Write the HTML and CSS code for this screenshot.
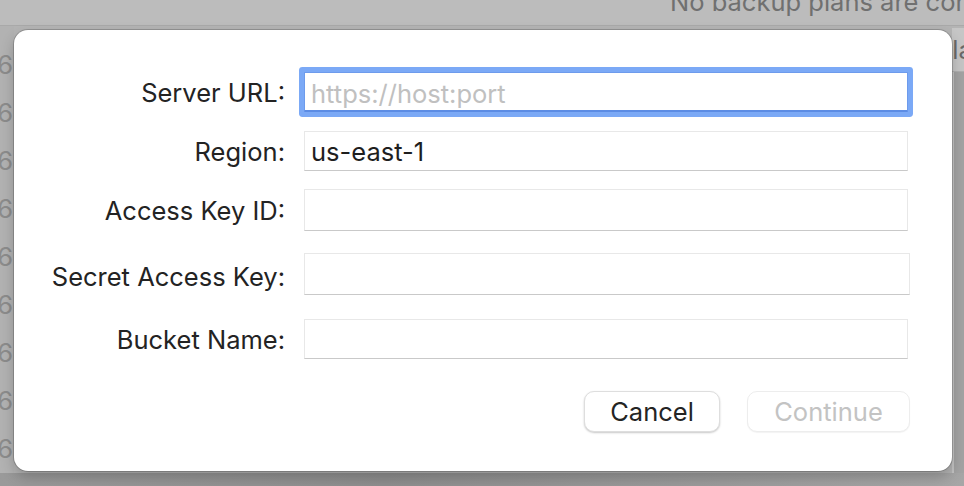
FILE: index.html
```html
<!DOCTYPE html>
<html lang="en">
<head>
<meta charset="utf-8">
<title>S3 Backup Destination</title>
<link rel="stylesheet" href="styles.css">
</head>
<body>
<div class="backdrop">
  <div class="top-strip"><span class="top-text">No backup plans are configured</span></div>
  <div class="middle">
    <div class="left-col">
      <div class="num">16</div><div class="num">16</div><div class="num">16</div>
      <div class="num">16</div><div class="num">16</div><div class="num">16</div>
      <div class="num">16</div><div class="num">16</div><div class="num">16</div>
    </div>
    <div class="spacer"></div>
    <div class="right-col">
      <div class="right-btn"><span>Plans</span></div>
      <div class="right-rest"></div>
    </div>
  </div>
  <div class="bottom-strip"></div>
</div>

<div class="modal">
  <form class="form">
    <div class="row row-1">
      <label class="label" for="url">Server URL:</label>
      <input class="field field-focus" id="url" type="text" placeholder="https://host:port">
    </div>
    <div class="row row-2">
      <label class="label" for="region">Region:</label>
      <input class="field" id="region" type="text" value="us-east-1">
    </div>
    <div class="row row-3">
      <label class="label" for="akid">Access Key ID:</label>
      <input class="field field-tall" id="akid" type="text">
    </div>
    <div class="row row-4">
      <label class="label" for="secret">Secret Access Key:</label>
      <input class="field field-tall field-wide" id="secret" type="password">
    </div>
    <div class="row row-5">
      <label class="label" for="bucket">Bucket Name:</label>
      <input class="field" id="bucket" type="text">
    </div>
    <div class="actions">
      <button type="button" class="btn btn-cancel">Cancel</button>
      <button type="button" class="btn btn-disabled" disabled>Continue</button>
    </div>
  </form>
</div>
</body>
</html>
```

FILE: styles.css
```css
* { box-sizing: border-box; }

html, body {
  margin: 0;
  padding: 0;
  width: 964px;
  height: 486px;
  overflow: hidden;
}

body {
  font-family: Inter, "Liberation Sans", Arial, sans-serif;
  background: #b4b4b4;
  position: relative;
}

.backdrop {
  display: flex;
  flex-direction: column;
  height: 486px;
}

.top-strip {
  height: 30px;
  background: #bcbcbc;
  overflow: hidden;
  display: flex;
  padding-left: 670px;
  border-bottom: 1px solid #a9a9a9;
}

.top-text {
  font-size: 25.5px;
  line-height: 26px;
  color: #707070;
  white-space: nowrap;
  margin-top: -11px;
}

.middle {
  flex: 1;
  display: flex;
}

.left-col {
  width: 14px;
  overflow: hidden;
  background: #b2b2b2;
  padding-top: 15px;
  display: flex;
  flex-direction: column;
  align-items: flex-end;
  padding-right: 1px;
}

.num {
  font-size: 25.5px;
  line-height: 48px;
  height: 48px;
  color: #8c8c8c;
  white-space: nowrap;
}

.spacer { flex: 1; }

.right-col {
  width: 12px;
  display: flex;
  flex-direction: column;
  overflow: hidden;
}

.right-btn {
  height: 44px;
  margin-top: 2px;
  background: #c6c6c6;
  border-bottom: 1px solid #b0b0b0;
  display: flex;
  justify-content: flex-start;
  overflow: hidden;
}

.right-btn span {
  font-size: 25.5px;
  line-height: 44px;
  color: #6a6a6a;
  white-space: nowrap;
  margin-left: -16px;
}

.right-rest {
  flex: 1;
  background: #a3a3a3;
  border-left: 2px solid #c4c4c4;
}

.bottom-strip {
  height: 15px;
  background: linear-gradient(90deg, #9a9a9a 0%, #8e8e8e 40%, #a6a6a6 100%);
}

/* Modal sheet overlay */
.modal {
  position: absolute;
  left: 14px;
  top: 30px;
  width: 938px;
  height: 441px;
  background: #ffffff;
  border-radius: 14px;
  box-shadow: 0 0 0 1px rgba(0, 0, 0, 0.18), 0 6px 14px rgba(0, 0, 0, 0.22);
}

.form {
  display: flex;
  flex-direction: column;
  padding-top: 42px;
}

.row {
  display: flex;
  align-items: center;
}

.row-2 { margin-top: 19px; }
.row-3 { margin-top: 18px; }
.row-4 { margin-top: 22px; }
.row-5 { margin-top: 24px; }

.label {
  width: 271px;
  text-align: right;
  font-size: 25.5px;
  color: #232323;
  margin-right: 19px;
  white-space: nowrap;
}

.row-4 .label { position: relative; top: 2px; }

.field {
  width: 604px;
  height: 40px;
  border: 1px solid #e8e8e8;
  border-bottom: 1px solid #c9c9c9;
  border-radius: 0;
  background: #ffffff;
  font-family: Inter, "Liberation Sans", Arial, sans-serif;
  font-size: 25.5px;
  color: #1e1e1e;
  padding: 0 6px;
  outline: none;
  margin: 0;
}

.field::placeholder { color: #c0c0c0; }

.field-tall { height: 42px; }
.field-wide { width: 606px; }

.field-focus {
  border: 1px solid #6d9bec;
  border-bottom: 2px solid #5c8ce4;
  border-radius: 1px;
  box-shadow: 0 0 0 5px #7ba9f6;
  padding-top: 3px;
}

.actions {
  display: flex;
  justify-content: flex-end;
  gap: 27px;
  margin-top: 32px;
  padding-right: 42px;
}

.btn {
  height: 41px;
  border-radius: 10px;
  font-family: Inter, "Liberation Sans", Arial, sans-serif;
  font-size: 25.5px;
  background: #ffffff;
  padding: 0;
}

.btn-cancel {
  width: 136px;
  color: #242424;
  border: 1px solid #dedede;
  box-shadow: 0 1px 2px rgba(0, 0, 0, 0.22);
}

.btn-disabled {
  width: 163px;
  color: #c3c3c3;
  border: 1px solid #ededed;
  box-shadow: 0 1px 1px rgba(0, 0, 0, 0.05);
}
```
